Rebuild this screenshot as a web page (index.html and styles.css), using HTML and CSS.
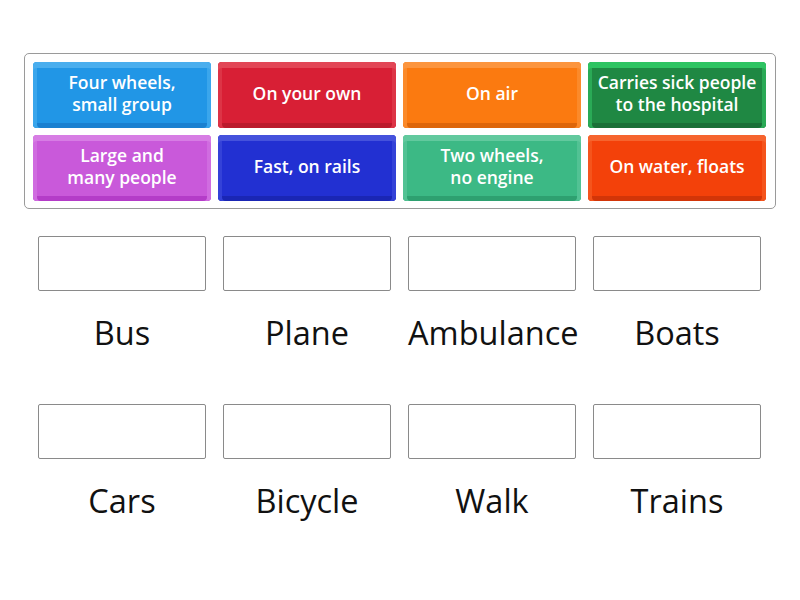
FILE: index.html
```html
<!DOCTYPE html>
<html>
<head>
<meta charset="utf-8">
<link rel="stylesheet" href="styles.css">
</head>
<body>
<div class="tray">
  <div class="tile blue">Four wheels,<br>small group</div>
  <div class="tile red">On your own</div>
  <div class="tile orange">On air</div>
  <div class="tile green">Carries sick people<br>to the hospital</div>
  <div class="tile purple">Large and<br>many people</div>
  <div class="tile navy">Fast, on rails</div>
  <div class="tile teal">Two wheels,<br>no engine</div>
  <div class="tile flame">On water, floats</div>
</div>
<div class="targets">
  <div class="cell"><div class="drop"></div><div class="label">Bus</div></div>
  <div class="cell"><div class="drop"></div><div class="label">Plane</div></div>
  <div class="cell"><div class="drop"></div><div class="label">Ambulance</div></div>
  <div class="cell"><div class="drop"></div><div class="label">Boats</div></div>
  <div class="cell"><div class="drop"></div><div class="label">Cars</div></div>
  <div class="cell"><div class="drop"></div><div class="label">Bicycle</div></div>
  <div class="cell"><div class="drop"></div><div class="label">Walk</div></div>
  <div class="cell"><div class="drop"></div><div class="label">Trains</div></div>
</div>
</body>
</html>
```
FILE: styles.css
```css
html, body {
  margin: 0;
  padding: 0;
  background: #ffffff;
}
body {
  font-family: "Open Sans", "Lato", sans-serif;
  width: 800px;
  height: 600px;
  overflow: hidden;
}
.tray {
  box-sizing: border-box;
  margin: 53px 0 0 24px;
  width: 752px;
  height: 156px;
  border: 1px solid #9a9a9a;
  border-radius: 5px;
  padding: 8px 9px 0 8px;
  display: grid;
  grid-template-columns: repeat(4, 178px);
  grid-auto-rows: 66px;
  column-gap: 7px;
  row-gap: 7px;
}
.tile {
  border-radius: 4px;
  color: #ffffff;
  font-size: 17.5px;
  font-weight: 600;
  line-height: 21.5px;
  text-align: center;
  display: flex;
  align-items: center;
  justify-content: center;
  padding-bottom: 3px;
  box-sizing: border-box;
  white-space: nowrap;
}
.blue {
  background: #2196e6;
  box-shadow: inset 0 6px 0 #4aaeee, inset 4px 0 0 #3aa6ec, inset -4px 0 0 #3aa6ec, inset 0 -5px 0 #1a80d0;
}
.red {
  background: #d81f35;
  box-shadow: inset 0 6px 0 #e24656, inset 4px 0 0 #dd3446, inset -4px 0 0 #dd3446, inset 0 -5px 0 #bb1a2c;
}
.orange {
  background: #fb7a10;
  box-shadow: inset 0 6px 0 #fc953e, inset 4px 0 0 #fb8a2a, inset -4px 0 0 #fb8a2a, inset 0 -5px 0 #dd660a;
}
.green {
  background: #1f8843;
  box-shadow: inset 0 6px 0 #2ec462, inset 4px 0 0 #2aaa56, inset -4px 0 0 #2aaa56, inset 0 -5px 0 #1a7038;
}
.purple {
  background: #c959da;
  box-shadow: inset 0 6px 0 #d77de4, inset 4px 0 0 #d06ce0, inset -4px 0 0 #d06ce0, inset 0 -5px 0 #b43cc8;
}
.navy {
  background: #2230d2;
  box-shadow: inset 0 6px 0 #4552dc, inset 4px 0 0 #3442d8, inset -4px 0 0 #3442d8, inset 0 -5px 0 #1a26b4;
}
.teal {
  background: #3cb985;
  box-shadow: inset 0 6px 0 #62c99e, inset 4px 0 0 #52c294, inset -4px 0 0 #52c294, inset 0 -5px 0 #2ea070;
}
.flame {
  background: #f3410a;
  box-shadow: inset 0 6px 0 #f6642e, inset 4px 0 0 #f5541c, inset -4px 0 0 #f5541c, inset 0 -5px 0 #d23508;
}
.targets {
  margin: 27px 0 0 38px;
  display: grid;
  grid-template-columns: repeat(4, 168px);
  column-gap: 17px;
  row-gap: 51px;
}
.cell {
  display: flex;
  flex-direction: column;
}
.drop {
  box-sizing: border-box;
  height: 55px;
  border: 1px solid #8a8a8a;
  border-radius: 2px;
}
.label {
  margin-top: 22px;
  height: 40px;
  line-height: 40px;
  font-size: 32.5px;
  text-align: center;
  color: #111111;
  white-space: nowrap;
}
```
